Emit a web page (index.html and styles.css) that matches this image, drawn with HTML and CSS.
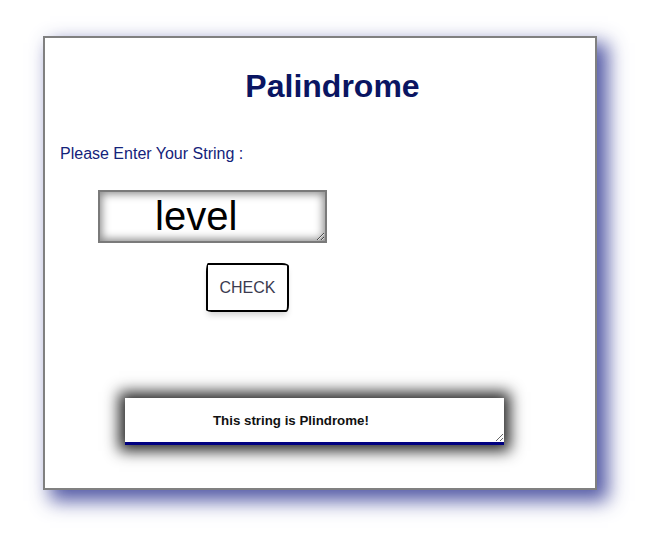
FILE: index.html
```html
<!DOCTYPE html>
<html>
<head>
<meta charset="utf-8">
<link rel="stylesheet" href="styles.css">
</head>
<body>
<div class="card">
  <h1 class="title">Palindrome</h1>
  <label class="label" for="inp">Please Enter Your String :</label>
  <textarea id="inp" class="input">level</textarea>
  <button class="check">CHECK</button>
  <textarea class="output">This string is Plindrome!</textarea>
</div>
</body>
</html>
```

FILE: styles.css
```css
html, body {
  margin: 0;
  padding: 0;
  background: #fff;
}
body {
  font-family: "Liberation Sans", Arial, sans-serif;
  padding: 36px 0 49px 43px;
}
.card {
  box-sizing: border-box;
  width: 554px;
  height: 454px;
  border: 2px solid #808080;
  background: #fff;
  box-shadow: 9px 9px 18px 2px rgba(55, 62, 150, 0.85);
  display: flex;
  flex-direction: column;
  align-items: flex-start;
}
.title {
  align-self: stretch;
  margin: 30px 0 0 0;
  padding-left: 25px;
  text-align: center;
  font-size: 32px;
  line-height: 37px;
  font-weight: bold;
  color: #0a1562;
}
.label {
  margin: 40px 0 0 15px;
  font-size: 16px;
  line-height: 18px;
  color: #14237a;
}
.input {
  box-sizing: border-box;
  margin: 27px 0 0 53px;
  width: 229px;
  height: 53px;
  padding: 1px 2px 1px 55px;
  border: 2px solid #7a7a7a;
  box-shadow: inset 0 0 9px 2px #8a8a8a;
  font-family: "Liberation Sans", Arial, sans-serif;
  font-size: 40px;
  line-height: 46px;
  text-align: left;
  color: #000;
  outline: none;
  overflow: hidden;
}
.check {
  box-sizing: border-box;
  margin: 20px 0 0 161px;
  width: 83px;
  height: 49px;
  padding: 0;
  background: #fff;
  border: 2px solid #000;
  border-radius: 2px 7px 3px 9px / 9px 3px 7px 2px;
  box-shadow: 0 5px 6px -2px rgba(0, 0, 0, 0.18);
  font-family: "Liberation Sans", Arial, sans-serif;
  font-size: 16px;
  color: #3b3b4f;
}
.output {
  box-sizing: border-box;
  margin: 86px 0 0 80px;
  width: 379px;
  height: 47px;
  padding: 15px 0 0 88px;
  border: none;
  border-bottom: 3px solid #000080;
  box-shadow: 0 0 14px 6px rgba(0, 0, 0, 0.85);
  font-family: "Liberation Sans", Arial, sans-serif;
  font-size: 13.3px;
  line-height: 15px;
  font-weight: bold;
  color: #111;
  outline: none;
  overflow: hidden;
}
```
